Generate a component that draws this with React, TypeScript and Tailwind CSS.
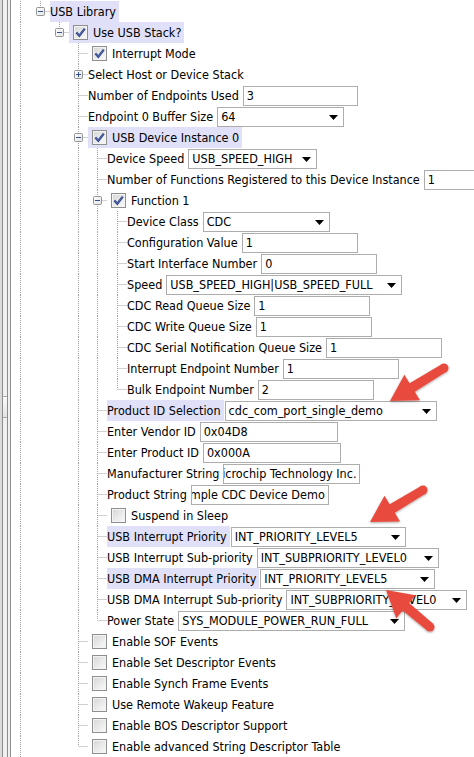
import React from "react";

// tree connector x positions for each depth (page coordinates)
const X = [40, 59, 78, 97, 117];
const STRIP = 12;

interface Field {
  value: string;
  w: string;
  select?: boolean;
  clip?: boolean;
}

interface Row {
  level: number;
  label: string;
  exp?: "-" | "+";
  check?: boolean;
  hl?: boolean;
  field?: Field;
}

const rows: Row[] = [
  { level: 0, label: "USB Library", exp: "-", hl: true },
  { level: 1, label: "Use USB Stack?", exp: "-", check: true, hl: true },
  { level: 2, label: "Interrupt Mode", check: true },
  { level: 2, label: "Select Host or Device Stack", exp: "+" },
  { level: 2, label: "Number of Endpoints Used", field: { value: "3", w: "w-[115px]" } },
  { level: 2, label: "Endpoint 0 Buffer Size", field: { value: "64", w: "w-[127px]", select: true } },
  { level: 2, label: "USB Device Instance 0", exp: "-", check: true, hl: true },
  { level: 3, label: "Device Speed", field: { value: "USB_SPEED_HIGH", w: "w-[129px]", select: true } },
  { level: 3, label: "Number of Functions Registered to this Device Instance", field: { value: "1", w: "w-[115px]" } },
  { level: 3, label: "Function 1", exp: "-", check: true },
  { level: 4, label: "Device Class", field: { value: "CDC", w: "w-[127px]", select: true } },
  { level: 4, label: "Configuration Value", field: { value: "1", w: "w-[116px]" } },
  { level: 4, label: "Start Interface Number", field: { value: "0", w: "w-[116px]" } },
  { level: 4, label: "Speed", field: { value: "USB_SPEED_HIGH|USB_SPEED_FULL", w: "w-[236px]", select: true } },
  { level: 4, label: "CDC Read Queue Size", field: { value: "1", w: "w-[116px]" } },
  { level: 4, label: "CDC Write Queue Size", field: { value: "1", w: "w-[116px]" } },
  { level: 4, label: "CDC Serial Notification Queue Size", field: { value: "1", w: "w-[116px]" } },
  { level: 4, label: "Interrupt Endpoint Number", field: { value: "1", w: "w-[116px]" } },
  { level: 4, label: "Bulk Endpoint Number", field: { value: "2", w: "w-[116px]" } },
  { level: 3, label: "Product ID Selection", hl: true, field: { value: "cdc_com_port_single_demo", w: "w-[212px]", select: true } },
  { level: 3, label: "Enter Vendor ID", field: { value: "0x04D8", w: "w-[138px]" } },
  { level: 3, label: "Enter Product ID", field: { value: "0x000A", w: "w-[138px]" } },
  { level: 3, label: "Manufacturer String", field: { value: "Microchip Technology Inc.", w: "w-[137px]", clip: true } },
  { level: 3, label: "Product String", field: { value: "Sample CDC Device Demo", w: "w-[138px]", clip: true } },
  { level: 3, label: "Suspend in Sleep", check: false },
  { level: 3, label: "USB Interrupt Priority", hl: true, field: { value: "INT_PRIORITY_LEVEL5", w: "w-[175px]", select: true } },
  { level: 3, label: "USB Interrupt Sub-priority", field: { value: "INT_SUBPRIORITY_LEVEL0", w: "w-[182px]", select: true } },
  { level: 3, label: "USB DMA Interrupt Priority", hl: true, field: { value: "INT_PRIORITY_LEVEL5", w: "w-[175px]", select: true } },
  { level: 3, label: "USB DMA Interrupt Sub-priority", field: { value: "INT_SUBPRIORITY_LEVEL0", w: "w-[181px]", select: true } },
  { level: 3, label: "Power State", field: { value: "SYS_MODULE_POWER_RUN_FULL", w: "w-[227px]", select: true } },
  { level: 2, label: "Enable SOF Events", check: false },
  { level: 2, label: "Enable Set Descriptor Events", check: false },
  { level: 2, label: "Enable Synch Frame Events", check: false },
  { level: 2, label: "Use Remote Wakeup Feature", check: false },
  { level: 2, label: "Enable BOS Descriptor Support", check: false },
  { level: 2, label: "Enable advanced String Descriptor Table", check: false },
];

// vertical guide lines: drawn full through rows [from, to), half (top->middle) on row `to`
const guides = [
  { x: 20, from: 0, to: 999 },
  { x: 40, from: 0, to: 0 },
  { x: 59, from: 1, to: 1 },
  { x: 78, from: 2, to: 35 },
  { x: 97, from: 7, to: 29 },
  { x: 117, from: 10, to: 18 },
];

const DOT = "#a2a2a2";

function Guides({ index, row }: { index: number; row: Row }) {
  const cx = X[row.level];
  const w = cx + 10 - STRIP;
  const sx = (x: number) => x - STRIP + 0.5;
  return (
    <svg width={w} height={21} className="shrink-0">
      {guides.map((g) => {
        if (index < g.from || index > g.to) return null;
        const y2 = index === g.to ? 10.5 : 21;
        return (
          <line key={g.x} x1={sx(g.x)} y1={0} x2={sx(g.x)} y2={y2} stroke={DOT} strokeDasharray="1 1" />
        );
      })}
      <line
        x1={sx(cx) + (row.exp ? 5 : 1)}
        y1={10.5}
        x2={w}
        y2={10.5}
        stroke={DOT}
        strokeDasharray="1 1"
      />
      {row.exp && (
        <g>
          <defs>
            <linearGradient id={`eg${index}`} x1="0" y1="0" x2="1" y2="1">
              <stop offset="0" stopColor="#ffffff" />
              <stop offset="1" stopColor="#e2e2e2" />
            </linearGradient>
          </defs>
          <rect
            x={cx - STRIP - 3.5}
            y={6.5}
            width={8}
            height={8}
            rx={1}
            fill={`url(#eg${index})`}
            stroke="#939393"
          />
          <line x1={cx - STRIP - 2} y1={10.5} x2={cx - STRIP + 3} y2={10.5} stroke="#34508f" />
          {row.exp === "+" && (
            <line x1={sx(cx)} y1={8} x2={sx(cx)} y2={13} stroke="#34508f" />
          )}
        </g>
      )}
    </svg>
  );
}

function CheckBox({ on }: { on: boolean }) {
  return (
    <span className="w-[15px] h-[15px] shrink-0 border border-[#8e8f8f] bg-gradient-to-br from-[#d6d6d6] to-[#fbfbfb] shadow-[inset_0_0_0_1px_#f3f3f3] flex items-center justify-center">
      {on && (
        <svg width={11} height={11} viewBox="0 0 11 11">
          <path d="M1.4 5.6 L4.3 8.8 L9.8 1.6" fill="none" stroke="#2f4489" strokeWidth={2.3} />
          <path d="M1.8 5.7 L4.3 8.4 L9.4 2" fill="none" stroke="#7087c6" strokeWidth={0.6} />
        </svg>
      )}
    </span>
  );
}

function FieldBox({ f }: { f: Field }) {
  return (
    <div
      className={`${f.w} h-[20px] shrink-0 ml-px border border-[#adadad] bg-white flex items-center overflow-hidden leading-[18px] pt-px`}
    >
      {f.clip ? (
        <div className="flex-1 flex justify-end overflow-hidden whitespace-nowrap pr-[3px]">
          <span>{f.value}</span>
        </div>
      ) : (
        <span className="flex-1 pl-[3px] whitespace-nowrap overflow-hidden">{f.value}</span>
      )}
      {f.select && (
        <svg width={9} height={5} className="shrink-0 mr-[5px]">
          <polygon points="0,0 9,0 4.5,5" fill="#000" />
        </svg>
      )}
    </div>
  );
}

function TreeRow({ row, index }: { row: Row; index: number }) {
  const hasCheck = row.check !== undefined;
  return (
    <div className="flex h-[21px] items-center whitespace-nowrap">
      <Guides index={index} row={row} />
      <div className={`flex h-full items-center pr-[3px] ${row.hl ? "bg-[#e0e0f8]" : ""}`}>
        {hasCheck && (
          <span className="ml-[4px] mr-[5px] flex">
            <CheckBox on={!!row.check} />
          </span>
        )}
        <span className="pt-[2px]">{row.label}</span>
      </div>
      {row.field && <FieldBox f={row.field} />}
    </div>
  );
}

type Pt = [number, number];

function arrowPoints(tail: Pt, tip: Pt, headLen: number, headHalf: number, wTail: number, wHead: number) {
  const dx = tip[0] - tail[0];
  const dy = tip[1] - tail[1];
  const len = Math.hypot(dx, dy);
  const ux = dx / len;
  const uy = dy / len;
  const nx = -uy;
  const ny = ux;
  const bx = tip[0] - ux * headLen;
  const by = tip[1] - uy * headLen;
  const pts: Pt[] = [
    [tail[0] + (nx * wTail) / 2, tail[1] + (ny * wTail) / 2],
    [bx + (nx * wHead) / 2, by + (ny * wHead) / 2],
    [bx + nx * headHalf, by + ny * headHalf],
    tip,
    [bx - nx * headHalf, by - ny * headHalf],
    [bx - (nx * wHead) / 2, by - (ny * wHead) / 2],
    [tail[0] - (nx * wTail) / 2, tail[1] - (ny * wTail) / 2],
  ];
  return pts.map((p) => p.join(",")).join(" ");
}

const arrows: { tail: Pt; tip: Pt }[] = [
  { tail: [444, 368], tip: [390, 401] },
  { tail: [423, 490], tip: [370, 522] },
  { tail: [430, 627], tip: [386, 590] },
];

function Arrows() {
  return (
    <svg className="absolute inset-0 pointer-events-none" width={474} height={757}>
      <defs>
        <filter id="ash" x="-20%" y="-20%" width="140%" height="140%">
          <feDropShadow dx="0" dy="1" stdDeviation="0.8" floodColor="#000" floodOpacity="0.35" />
        </filter>
      </defs>
      {arrows.map((a, i) => (
        <g key={i} filter="url(#ash)" fill="#e84c3d">
          <polygon points={arrowPoints(a.tail, a.tip, 26, 15, 9, 10)} />
          <circle cx={a.tail[0]} cy={a.tail[1]} r={4.5} />
        </g>
      ))}
    </svg>
  );
}

export default function App() {
  return (
    <div className="relative w-[474px] h-[757px] overflow-hidden bg-white text-black text-[12.5px] leading-none font-['DejaVu_Sans_Condensed','Liberation_Sans',sans-serif]">
      <div className="flex h-full">
        {/* split-pane edge on the left */}
        <div className="flex h-full shrink-0">
          <div className="w-[2px] bg-[#dadada]" />
          <div className="w-px bg-[#8c8c8c]" />
          <div className="w-[4px] bg-[#f0f0f0] flex flex-col">
            <div className="h-[396px]" />
            <div className="h-[22px] border-y border-[#a9a9a9] bg-gradient-to-b from-[#fafafa] to-[#e4e4e4]" />
          </div>
          <div className="w-px bg-[#8c8c8c]" />
          <div className="w-[2px] bg-[#f0f0f0]" />
          <div className="w-px bg-[#8c8c8c]" />
          <div className="w-px bg-white" />
        </div>
        <div className="flex-1 pt-px">
          {rows.map((r, i) => (
            <TreeRow key={i} row={r} index={i} />
          ))}
        </div>
      </div>
      <Arrows />
    </div>
  );
}
